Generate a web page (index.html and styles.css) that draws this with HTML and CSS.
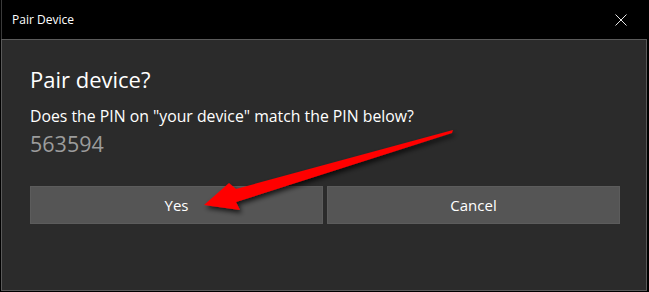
FILE: index.html
```html
<!DOCTYPE html>
<html>
<head>
<meta charset="utf-8">
<link rel="stylesheet" href="styles.css">
</head>
<body>
<div class="window">
  <div class="titlebar">
    <span class="title">Pair Device</span>
    <svg class="close" width="12" height="12" viewBox="0 0 12 12"><path d="M0.5 0.5 L11.5 11.5 M11.5 0.5 L0.5 11.5" stroke="#e6e6e6" stroke-width="1" fill="none"/></svg>
  </div>
  <div class="dialog">
    <h1 class="heading">Pair device?</h1>
    <p class="question">Does the PIN on "your device" match the PIN below?</p>
    <p class="pin">563594</p>
    <div class="buttons">
      <button class="btn">Yes</button>
      <button class="btn">Cancel</button>
    </div>
  </div>
  <svg class="arrow" width="649" height="292" viewBox="0 0 649 292">
    <defs>
      <filter id="sh" x="-20%" y="-20%" width="140%" height="160%">
        <feDropShadow dx="2" dy="3" stdDeviation="2.5" flood-color="#000" flood-opacity="0.75"/>
      </filter>
    </defs>
    <polygon filter="url(#sh)" fill="#ff0000" points="204,205 229,183 236,189 453,130 452,133 236,202 240,210"/>
  </svg>
</div>
</body>
</html>
```

FILE: styles.css
```css
html, body {
  margin: 0;
  padding: 0;
  background: #000;
}
.window {
  position: relative;
  width: 649px;
  height: 292px;
  background: #000;
  font-family: "Open Sans", "Noto Sans", sans-serif;
  overflow: hidden;
}
.titlebar {
  height: 39px;
  margin-left: 1px;
  border-left: 1px solid #3a3a3a;
  box-sizing: border-box;
  display: flex;
  align-items: center;
  justify-content: space-between;
  padding: 0 22px 0 10px;
}
.title {
  color: #fff;
  font-size: 12px;
  line-height: 18px;
}
.close {
  display: block;
}
.dialog {
  margin: 0 2px 1px 1px;
  height: 252px;
  box-sizing: border-box;
  border: 1px solid #5a5a5a;
  background: #2b2b2b;
  padding: 24px 26px 0 28px;
}
.heading {
  margin: 0;
  font-size: 22px;
  line-height: 30px;
  font-weight: 400;
  color: #fff;
}
.question {
  margin: 12px 0 0;
  font-size: 15.8px;
  line-height: 20px;
  color: #fff;
}
.pin {
  margin: 4px 0 0;
  font-size: 21.5px;
  line-height: 28px;
  color: #9c9c9c;
}
.buttons {
  margin-top: 28px;
  display: grid;
  grid-template-columns: 1fr 1fr;
  gap: 4px;
}
.btn {
  height: 38px;
  margin: 0;
  border: 1px solid #5c5c5c;
  background: #555555;
  color: #fff;
  font-family: "Open Sans", "Noto Sans", sans-serif;
  font-size: 15px;
  padding: 0;
}
.arrow {
  position: absolute;
  left: 0;
  top: 0;
  pointer-events: none;
}
```
